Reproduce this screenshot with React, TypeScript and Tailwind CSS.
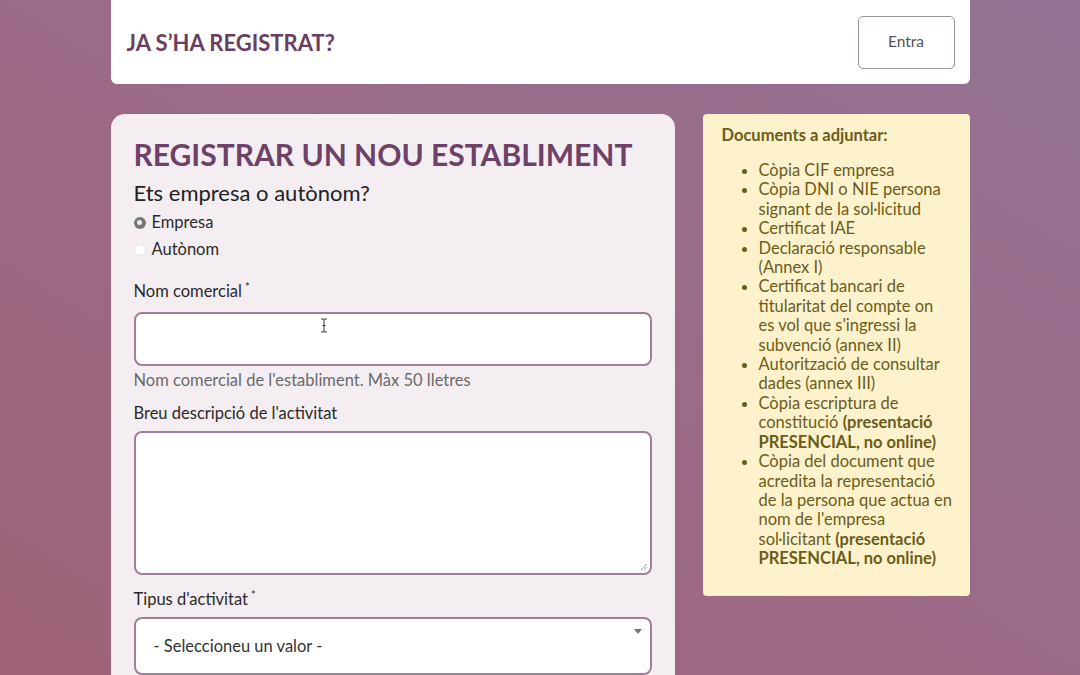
const docs: { text: string; bold?: string }[] = [
  { text: "Còpia CIF empresa" },
  { text: "Còpia DNI o NIE persona signant de la sol·licitud" },
  { text: "Certificat IAE" },
  { text: "Declaració responsable (Annex I)" },
  { text: "Certificat bancari de titularitat del compte on es\u00a0vol que s'ingressi la subvenció (annex II)" },
  { text: "Autorització de consultar dades (annex III)" },
  { text: "Còpia escriptura de constitució ", bold: "(presentació PRESENCIAL, no online)" },
  {
    text: "Còpia del document que acredita la representació de la persona que actua en nom de l'empresa sol·licitant ",
    bold: "(presentació PRESENCIAL, no online)",
  },
];

function Label({ children, required }: { children: string; required?: boolean }) {
  return (
    <div className="text-[16.5px] leading-[20px] text-[#2a2a2a]">
      {children}
      {required && <span className="relative -top-[6px] ml-[3px] text-[11px]">*</span>}
    </div>
  );
}

export default function App() {
  return (
    <div
      className="h-[675px] w-full overflow-hidden bg-gradient-to-tr from-[#9f6378] via-[#9b6a86] to-[#947394] text-[16.5px]"
      style={{ fontFamily: "Lato, 'Noto Sans', sans-serif" }}
    >
      <div className="mx-auto w-[859px]">
        <div className="flex h-[84px] items-center justify-between rounded-b-[6px] bg-white pl-[16px] pr-[15px]">
          <h2 className="text-[22px] font-bold text-[#6a3e62]">JA S’HA REGISTRAT?</h2>
          <button className="flex h-[53px] w-[97px] items-center justify-center rounded-[5px] border border-[#9b929a] text-[15.5px] text-[#555]">
            Entra
          </button>
        </div>

        <div className="mt-[30px] flex items-start gap-[28px]">
          <div className="w-[564px] rounded-t-[14px] bg-[#f4eef3] px-[23px] pt-[21px] pb-[40px]">
            <h1 className="whitespace-nowrap text-[30px] leading-[38px] font-bold text-[#6d4266]">REGISTRAR UN NOU ESTABLIMENT</h1>
            <p className="mt-[7px] text-[22px] leading-[26px] text-[#222]">Ets empresa o autònom?</p>

            <div className="mt-[3px] flex flex-col">
              <label className="flex h-[27px] items-center gap-[6px] text-[16.5px] text-[#2a2a2a]">
                <span className="flex h-[12px] w-[12px] items-center justify-center rounded-full bg-[#777]">
                  <span className="h-[5px] w-[5px] rounded-full bg-[#eee]" />
                </span>
                Empresa
              </label>
              <label className="flex h-[27px] items-center gap-[6px] text-[16.5px] text-[#2a2a2a]">
                <span className="h-[12px] w-[12px] rounded-full border border-[#ece6ea] bg-white" />
                Autònom
              </label>
            </div>

            <div className="mt-[18px]">
              <Label required>Nom comercial</Label>
              <div className="relative mt-[9px] h-[54px] rounded-[8px] border-2 border-[#9e8199] bg-white">
                <svg className="absolute left-[184px] top-[4px]" width="8" height="15" viewBox="0 0 8 15">
                  <path d="M1 1h2.5L4 1.8 4.5 1H7M4 1.8v11.4M1 14h2.5l.5-.8.5.8H7M2.5 7.5h3" fill="none" stroke="#333" strokeWidth="1" />
                </svg>
              </div>
              <p className="mt-[4px] text-[16.5px] leading-[20px] text-[#6a6a6a]">
                Nom comercial de l'establiment. Màx 50 lletres
              </p>
            </div>

            <div className="mt-[13px]">
              <Label>Breu descripció de l'activitat</Label>
              <div className="relative mt-[8px] h-[144px] rounded-[8px] border-2 border-[#9e8199] bg-white">
                <svg className="absolute right-[2px] bottom-[2px]" width="8" height="8" viewBox="0 0 8 8">
                  <path d="M7 1L1 7M7 4L4 7" stroke="#999" strokeWidth="1" />
                </svg>
              </div>
            </div>

            <div className="mt-[14px]">
              <Label required>Tipus d'activitat</Label>
              <div className="relative mt-[6px] flex h-[58px] items-center rounded-[8px] border-2 border-[#9e8199] bg-white pl-[18px] text-[16.5px] text-[#333]">
                - Seleccioneu un valor -
                <svg className="absolute right-[8px] top-[10px]" width="8" height="5" viewBox="0 0 8 5">
                  <path d="M0 0h8L4 5z" fill="#777" />
                </svg>
              </div>
            </div>
          </div>

          <div className="w-[267px] rounded-[4px] bg-[#fdf2cc] pt-[11px] pr-[14px] pb-[27px] pl-[19px] text-[#6b5c1a]">
            <h3 className="text-[16.5px] leading-[20px] font-bold">Documents a adjuntar:</h3>
            <ul className="mt-[16px] list-disc pl-[37px] text-[16.5px] leading-[19.4px]">
              {docs.map((d) => (
                <li key={d.text}>
                  {d.text}
                  {d.bold && <strong className="font-bold">{d.bold}</strong>}
                </li>
              ))}
            </ul>
          </div>
        </div>
      </div>
    </div>
  );
}
